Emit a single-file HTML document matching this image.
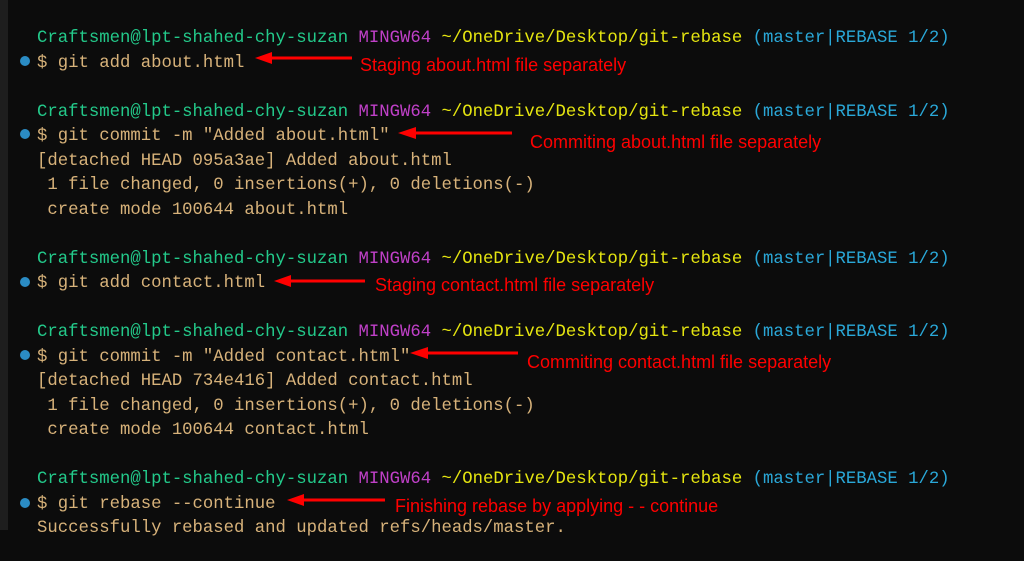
<!DOCTYPE html>
<html><head><meta charset="utf-8"><style>
html,body{margin:0;padding:0;width:1024px;height:561px;overflow:hidden;background:#0c0c0c;}
.strip{position:absolute;left:0;top:0;width:8px;height:530px;background:#1e1e1e;}
.t{position:absolute;left:37px;font-family:"Liberation Mono",monospace;font-size:17.3px;white-space:pre;line-height:24.5px;color:#d7b27a;}
.g{color:#23c98a}.m{color:#c040c8}.y{color:#e5e510}.c{color:#2aa8d8}
.dot{position:absolute;left:20px;width:10px;height:10px;border-radius:50%;background:#2b8cc4;}
.a{position:absolute;font-family:"Liberation Sans",sans-serif;font-size:18px;color:#f00;white-space:pre;}
svg{position:absolute;left:0;top:0}
</style></head><body>
<div class="strip"></div>
<div class="t" style="top:27px"><span class="g">Craftsmen@lpt-shahed-chy-suzan</span> <span class="m">MINGW64</span> <span class="y">~/OneDrive/Desktop/git-rebase</span> <span class="c">(master|REBASE 1/2)</span>
$ git add about.html

<span class="g">Craftsmen@lpt-shahed-chy-suzan</span> <span class="m">MINGW64</span> <span class="y">~/OneDrive/Desktop/git-rebase</span> <span class="c">(master|REBASE 1/2)</span>
$ git commit -m "Added about.html"
[detached HEAD 095a3ae] Added about.html
 1 file changed, 0 insertions(+), 0 deletions(-)
 create mode 100644 about.html

<span class="g">Craftsmen@lpt-shahed-chy-suzan</span> <span class="m">MINGW64</span> <span class="y">~/OneDrive/Desktop/git-rebase</span> <span class="c">(master|REBASE 1/2)</span>
$ git add contact.html

<span class="g">Craftsmen@lpt-shahed-chy-suzan</span> <span class="m">MINGW64</span> <span class="y">~/OneDrive/Desktop/git-rebase</span> <span class="c">(master|REBASE 1/2)</span>
$ git commit -m "Added contact.html"
[detached HEAD 734e416] Added contact.html
 1 file changed, 0 insertions(+), 0 deletions(-)
 create mode 100644 contact.html

<span class="g">Craftsmen@lpt-shahed-chy-suzan</span> <span class="m">MINGW64</span> <span class="y">~/OneDrive/Desktop/git-rebase</span> <span class="c">(master|REBASE 1/2)</span>
$ git rebase --continue
Successfully rebased and updated refs/heads/master.</div>
<div class="dot" style="top:56px"></div>
<div class="dot" style="top:129px"></div>
<div class="dot" style="top:277px"></div>
<div class="dot" style="top:350px"></div>
<div class="dot" style="top:498px"></div>
<svg width="1024" height="561">
<g stroke="#f00" stroke-width="3" fill="#f00">
<line x1="268" y1="58" x2="352" y2="58"/><polygon points="255,58 272,52 272,64" stroke="none"/>
<line x1="414" y1="133" x2="512" y2="133"/><polygon points="398,133 416,127 416,139" stroke="none"/>
<line x1="288" y1="281" x2="365" y2="281"/><polygon points="274,281 291,275 291,287" stroke="none"/>
<line x1="426" y1="353" x2="518" y2="353"/><polygon points="410,353 428,347 428,359" stroke="none"/>
<line x1="302" y1="500" x2="385" y2="500"/><polygon points="287,500 304,494 304,506" stroke="none"/>
</g></svg>
<div class="a" style="left:360px;top:55px">Staging about.html file separately</div>
<div class="a" style="left:530px;top:132px">Commiting about.html file separately</div>
<div class="a" style="left:375px;top:275px">Staging contact.html file separately</div>
<div class="a" style="left:527px;top:352px">Commiting contact.html file separately</div>
<div class="a" style="left:395px;top:496px">Finishing rebase by applying - - continue</div>
</body></html>
